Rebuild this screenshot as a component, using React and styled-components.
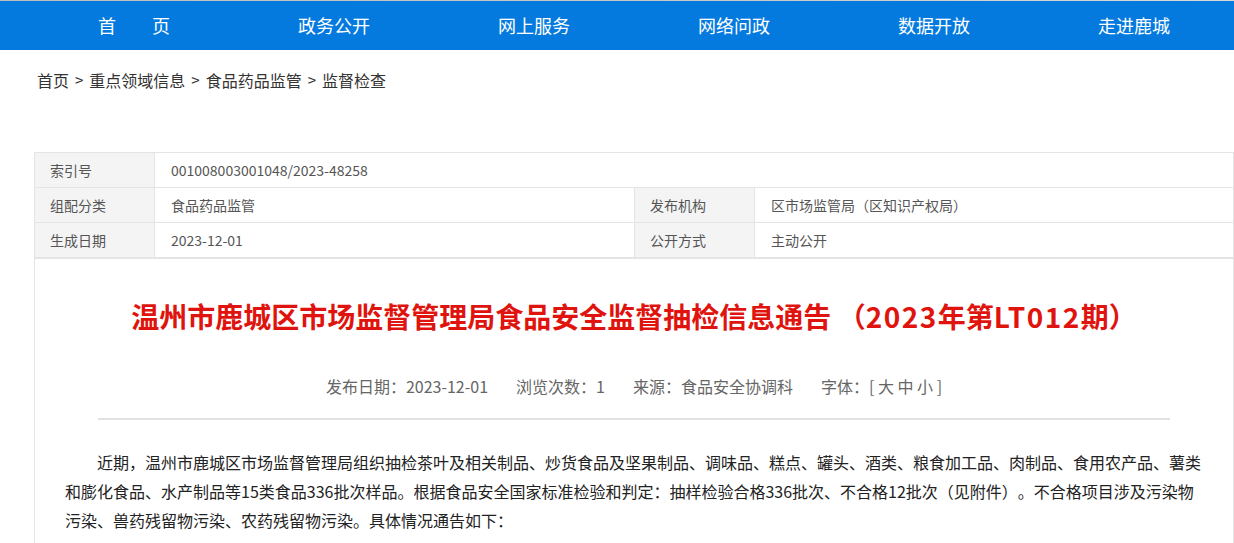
import React from "react";
import styled, { createGlobalStyle } from "styled-components";

const GlobalStyle = createGlobalStyle`
  html, body { margin: 0; padding: 0; background: #fff; }
  body {
    font-family: "Microsoft YaHei", "Noto Sans CJK SC", "Noto Sans", sans-serif;
    color: #333;
    overflow: hidden;
    text-spacing-trim: space-all;
  }
  * { box-sizing: border-box; }
`;

const TopStrip = styled.div`
  height: 1px;
  background: linear-gradient(to right, #bdbdbd 0%, #c9c9c9 60%, #d9d9d9 100%);
`;

const NavBar = styled.nav`
  height: 49px;
  background: #047ade;
`;

const NavInner = styled.ul`
  list-style: none;
  margin: 0 0 0 34px;
  padding: 0;
  width: 1200px;
  height: 100%;
  display: grid;
  grid-template-columns: repeat(6, 1fr);
`;

const NavItem = styled.li`
  display: flex;
  align-items: center;
  justify-content: center;
  color: #fff;
  font-size: 18px;
  line-height: 49px;
  padding-bottom: 2px;
  white-space: pre;
`;

const Page = styled.main`
  margin-left: 34px;
  width: 1200px;
`;

const Crumbs = styled.div`
  display: flex;
  align-items: flex-start;
  gap: 6px;
  padding: 18px 0 0 3px;
  height: 102px;
  font-size: 16px;
  line-height: 24px;
  color: #333;
`;

const CrumbSep = styled.span`
  font-size: 15px;
  color: #333;
`;

const InfoTable = styled.div`
  display: grid;
  grid-template-columns: 119px 480px 120px 1fr;
  border: 1px solid #e4e4e4;
  border-bottom: none;
  font-size: 14px;
  color: #555;
`;

const Cell = styled.div`
  height: 35px;
  display: flex;
  align-items: center;
  padding-left: ${(p) => (p.$label ? "15px" : "16px")};
  background: ${(p) => (p.$label ? "#f4f4f4" : "#fff")};
  border-bottom: 1px solid #e4e4e4;
  border-left: ${(p) => (p.$first ? "none" : "1px solid #e4e4e4")};
  grid-column: ${(p) => p.$span || "auto"};
`;

const Article = styled.article`
  border: 1px solid #e4e4e4;
  border-bottom: none;
  min-height: 300px;
`;

const Title = styled.h1`
  margin: 0;
  padding-top: 37px;
  text-align: center;
  font-size: 28px;
  line-height: 40px;
  font-weight: bold;
  color: #e0140e;
`;

const TitleNum = styled.span`
  letter-spacing: 1.5px;
`;

const Meta = styled.div`
  margin-top: 38px;
  display: flex;
  justify-content: center;
  gap: 28px;
  font-size: 16px;
  line-height: 24px;
  color: #666;
`;

const Divider = styled.hr`
  margin: 20px 63px 0;
  border: none;
  border-top: 2px solid #e2e2e2;
  height: 0;
`;

const Body = styled.div`
  padding: 28px 30px 0;
`;

const Para = styled.p`
  margin: 0;
  width: 1137px;
  text-indent: 2em;
  font-size: 16px;
  line-height: 29px;
  color: #222;
`;

const navItems = ["首　　页", "政务公开", "网上服务", "网络问政", "数据开放", "走进鹿城"];
const crumbs = ["首页", "重点领域信息", "食品药品监管", "监督检查"];

export default function App() {
  return (
    <>
      <GlobalStyle />
      <TopStrip />
      <NavBar>
        <NavInner>
          {navItems.map((n) => (
            <NavItem key={n}>{n}</NavItem>
          ))}
        </NavInner>
      </NavBar>
      <Page>
        <Crumbs>
          {crumbs.map((c, i) => (
            <React.Fragment key={c}>
              {i > 0 && <CrumbSep>&gt;</CrumbSep>}
              <span>{c}</span>
            </React.Fragment>
          ))}
        </Crumbs>
        <InfoTable>
          <Cell $label $first>索引号</Cell>
          <Cell $span="2 / 5">001008003001048/2023-48258</Cell>
          <Cell $label $first>组配分类</Cell>
          <Cell>食品药品监管</Cell>
          <Cell $label>发布机构</Cell>
          <Cell>区市场监管局（区知识产权局）</Cell>
          <Cell $label $first>生成日期</Cell>
          <Cell>2023-12-01</Cell>
          <Cell $label>公开方式</Cell>
          <Cell>主动公开</Cell>
        </InfoTable>
        <Article>
          <Title>
            温州市鹿城区市场监督管理局食品安全监督抽检信息通告 （<TitleNum>2023</TitleNum>年第<TitleNum>LT012</TitleNum>期）
          </Title>
          <Meta>
            <span>发布日期：2023-12-01</span>
            <span>浏览次数：1</span>
            <span>来源：食品安全协调科</span>
            <span>字体：[ 大 中 小 ]</span>
          </Meta>
          <Divider />
          <Body>
            <Para>
              近期，温州市鹿城区市场监督管理局组织抽检茶叶及相关制品、炒货食品及坚果制品、调味品、糕点、罐头、酒类、粮食加工品、肉制品、食用农产品、薯类和膨化食品、水产制品等15类食品336批次样品。根据食品安全国家标准检验和判定：抽样检验合格336批次、不合格12批次（见附件）。不合格项目涉及污染物污染、兽药残留物污染、农药残留物污染。具体情况通告如下：
            </Para>
          </Body>
        </Article>
      </Page>
    </>
  );
}
